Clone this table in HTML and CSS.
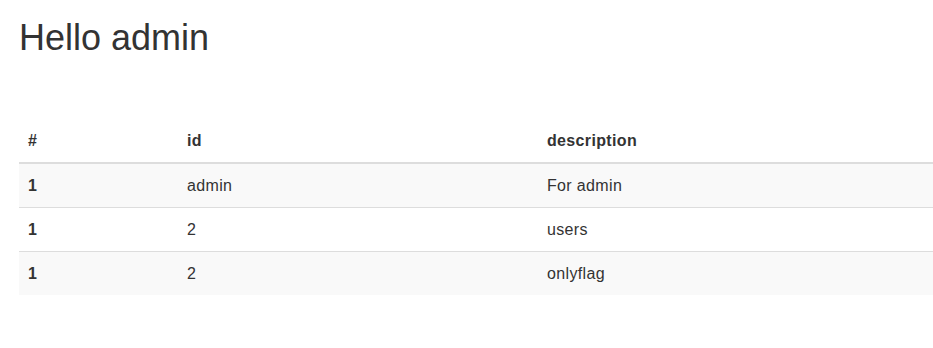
FILE: index.html
```html
<!DOCTYPE html>
<html lang="en">
<head>
    <meta charset="UTF-8">
    <meta name="viewport" content="width=device-width, initial-scale=1.0">
    <title>Hello admin</title>
    <link rel="stylesheet" href="styles.css">
</head>
<body>
    <div class="container">
        <h1>Hello admin</h1>

        <table class="table table-striped">
            <thead>
                <tr>
                    <th class="col-num">#</th>
                    <th class="col-id">id</th>
                    <th>description</th>
                </tr>
            </thead>
            <tbody>
                <tr>
                    <th>1</th>
                    <td>admin</td>
                    <td>For admin</td>
                </tr>
                <tr>
                    <th>1</th>
                    <td>2</td>
                    <td>users</td>
                </tr>
                <tr>
                    <th>1</th>
                    <td>2</td>
                    <td>onlyflag</td>
                </tr>
            </tbody>
        </table>
    </div>
</body>
</html>
```

FILE: styles.css
```css
body {
    margin: 0;
    font-family: "Liberation Sans", Arial, Helvetica, sans-serif;
    font-size: 16px;
    color: #333;
    background-color: #fff;
}

.container {
    padding: 0 0 0 19px;
}

h1 {
    font-size: 36px;
    font-weight: 500;
    line-height: 1.1;
    margin: 18px 0 61px;
}

.table {
    width: 100%;
    border-collapse: collapse;
    border-spacing: 0;
    table-layout: fixed;
}

.table th,
.table td {
    padding: 12px 8px 12px 9px;
    line-height: 19px;
    letter-spacing: 0.35px;
    text-align: left;
    vertical-align: top;
    border-top: 1px solid #ddd;
}

.table thead th {
    border-top: 0;
    border-bottom: 2px solid #ddd;
    vertical-align: bottom;
}

.col-num {
    width: 142px;
}

.col-id {
    width: 343px;
}

.table-striped tbody tr:nth-child(odd) {
    background-color: #f9f9f9;
}
```
